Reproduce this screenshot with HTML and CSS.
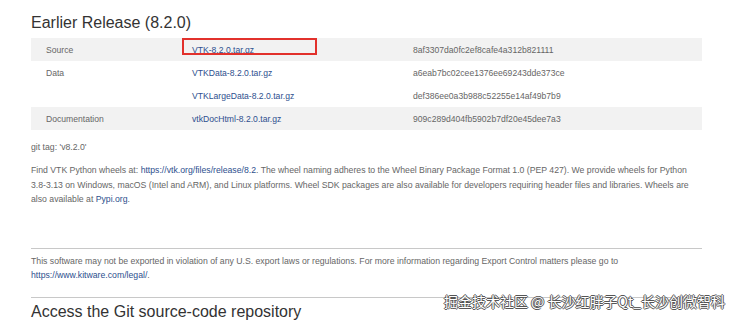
FILE: index.html
```html
<!DOCTYPE html>
<html lang="en">

<head>
    <meta charset="UTF-8">
    <meta name="viewport" content="width=device-width, initial-scale=1.0">
    <title>VTK Download</title>
    <link rel="stylesheet" href="styles.css">
</head>

<body>
    <div class="page">
        <h2 class="title">Earlier Release (8.2.0)</h2>

        <table class="files">
            <tbody>
                <tr class="odd">
                    <td class="kind">Source</td>
                    <td class="file">
                        <a href="#">VTK-8.2.0.tar.gz</a>
                        <span class="mark"></span>
                    </td>
                    <td class="hash">8af3307da0fc2ef8cafe4a312b821111</td>
                </tr>
                <tr>
                    <td class="kind">Data</td>
                    <td class="file"><a href="#">VTKData-8.2.0.tar.gz</a></td>
                    <td class="hash">a6eab7bc02cee1376ee69243dde373ce</td>
                </tr>
                <tr>
                    <td class="kind"></td>
                    <td class="file"><a href="#">VTKLargeData-8.2.0.tar.gz</a></td>
                    <td class="hash">def386ee0a3b988c52255e14af49b7b9</td>
                </tr>
                <tr class="odd">
                    <td class="kind">Documentation</td>
                    <td class="file"><a href="#">vtkDocHtml-8.2.0.tar.gz</a></td>
                    <td class="hash">909c289d404fb5902b7df20e45dee7a3</td>
                </tr>
            </tbody>
        </table>

        <p class="tag">git tag: 'v8.2.0'</p>

        <p class="wheels">Find VTK Python wheels at: <a href="#">https://vtk.org/files/release/8.2</a>. The wheel naming adheres to the Wheel Binary Package Format 1.0 (PEP 427). We provide wheels for Python 3.8-3.13 on Windows, macOS (Intel and ARM), and Linux platforms. Wheel SDK packages are also available for developers requiring header files and libraries. Wheels are also available at <a href="#">Pypi.org</a>.</p>

        <hr class="rule rule-top">

        <p class="export">This software may not be exported in violation of any U.S. export laws or regulations. For more information regarding Export Control matters please go to <a href="#">https://www.kitware.com/legal/</a>.</p>

        <hr class="rule">

        <h2 class="title title-next">Access the Git source-code repository</h2>
    </div>

    <div class="watermark">掘金技术社区 @ 长沙红胖子Qt_长沙创微智科</div>
</body>

</html>
```

FILE: styles.css
```css
body {
    margin: 0;
    font-family: "Liberation Sans", Arial, sans-serif;
    color: #666;
    overflow: hidden;
}

.page {
    width: 671px;
    padding-left: 31px;
}

a {
    color: #2d4f8e;
    text-decoration: none;
}

.title {
    font-size: 16px;
    font-weight: normal;
    line-height: 18px;
    color: #333;
    margin: 14px 0 6px;
}

.title-next {
    margin-top: 5px;
}

.files {
    width: 100%;
    border-collapse: collapse;
    font-size: 8.6px;
}

.files td {
    height: 23px;
    padding: 0 0 0 15px;
    text-align: left;
    vertical-align: middle;
}

.files tr.odd {
    background-color: #f2f2f2;
}

.kind {
    width: 131px;
}

.file {
    width: 206px;
    position: relative;
}

.mark {
    position: absolute;
    left: 5px;
    top: 0;
    width: 135px;
    height: 17px;
    box-sizing: border-box;
    border: 2px solid #e2312c;
}

.tag,
.wheels,
.export {
    font-size: 8.7px;
    line-height: 14.5px;
    margin: 0;
}

.wheels {
    max-width: 662px;
    margin-top: 8.5px;
}

.tag {
    margin-top: 10px;
}

.rule {
    border: 0;
    border-top: 1px solid #c8c8c8;
    margin: 14px 0 2px;
}

.rule-top {
    margin-top: 41px;
}

.export {
    margin-top: 5px;
}

.watermark {
    position: absolute;
    right: 10px;
    top: 291px;
    font-family: "Noto Sans CJK SC", sans-serif;
    font-size: 14px;
    color: #fff;
    text-shadow: 1px 0 #555, -1px 0 #555, 0 1px #555, 0 -1px #555;
}
```
